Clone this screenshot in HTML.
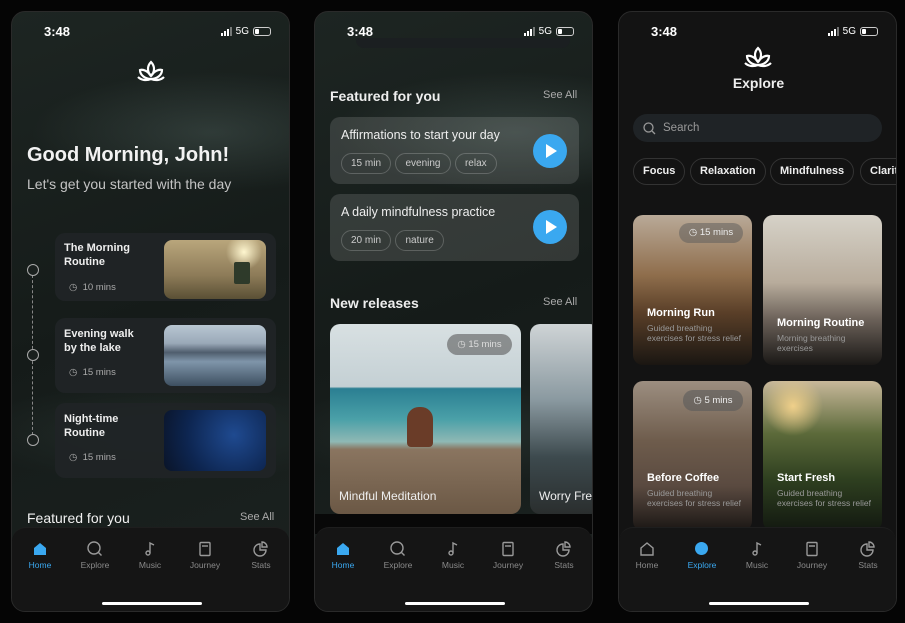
<!DOCTYPE html>
<html><head><meta charset="utf-8"><style>
*{margin:0;padding:0;box-sizing:border-box}
body{width:905px;height:623px;background:#050505;font-family:"Liberation Sans",sans-serif;position:relative;overflow:hidden;color:#eee}
.ph{position:absolute;top:11px;width:279px;height:601px;border-radius:14px;overflow:hidden;border:1px solid #2a2a2a}
.a{position:absolute}
.time{left:32px;top:12px;font-size:13px;font-weight:bold;color:#fff}
.sig{right:18px;top:14px;font-size:10px;color:#fff;display:flex;align-items:center;gap:4px}
.bars{display:flex;align-items:flex-end;gap:1px}
.bars i{display:block;width:2px;background:#fff}
.bat{width:18px;height:9px;border:1px solid #ccc;border-radius:3px;position:relative}
.bat:after{content:"";position:absolute;left:1px;top:1px;width:4px;height:5px;background:#fff;border-radius:1px}
.tab{left:0;right:0;bottom:0;height:84px;background:#151515;border-top-left-radius:14px;border-top-right-radius:14px;border-top:1px solid #1e1e1e}
.ti{position:absolute;top:13px;width:50px;text-align:center;font-size:8.5px;color:#8a8a8a}
.ti svg{display:block;margin:0 auto 3px}
.hi{position:absolute;bottom:6px;left:90px;width:100px;height:3px;background:#fff;border-radius:2px}
.card{background:rgba(32,36,38,.95);border-radius:10px}
.pill{border:1px solid rgba(255,255,255,.2);border-radius:12px;font-size:10px;color:#ccc;padding:4px 9px;display:inline-block}
.play{width:34px;height:34px;border-radius:50%;background:#3aa8f0}
.play:after{content:"";position:absolute;left:13px;top:10px;border-left:11px solid #fff;border-top:7px solid transparent;border-bottom:7px solid transparent}
.chip{border:1px solid #333;border-radius:14px;height:27px;font-size:11px;line-height:25px;padding:0 9px;color:#eee;font-weight:bold;position:absolute;top:146px;white-space:nowrap}
.gc{position:absolute;width:119px;border-radius:10px;overflow:hidden}
.gc b{position:absolute;left:14px;font-size:11px;color:#fff}
.gc p{position:absolute;left:14px;font-size:8.5px;color:#999;line-height:10px;width:95px}
.bg{background:radial-gradient(ellipse 180px 60px at 200px 120px,rgba(90,110,105,.35),transparent),radial-gradient(ellipse 200px 50px at 150px 420px,rgba(70,90,85,.25),transparent),linear-gradient(160deg,#1d2522,#151b19 50%,#1b2220)}
</style></head><body>

<!-- PHONE 1 -->
<div class="ph bg" style="left:11px">
<div class="a time">3:48</div>
<div class="a sig"><span class="bars"><i style="height:3px"></i><i style="height:5px"></i><i style="height:7px"></i><i style="height:9px;opacity:.4"></i></span>5G<span class="bat"></span></div>
<svg class="a" style="left:124px;top:47px" width="30" height="28" viewBox="0 0 30 28" fill="none" stroke="#fff" stroke-width="2.2"><path d="M15 3c-4 4-4 10 0 14 4-4 4-10 0-14z"/><path d="M15 17c-3-5-8-7-11-6 0 5 5 9 11 9"/><path d="M15 17c3-5 8-7 11-6 0 5-5 9-11 9"/><path d="M15 20c-5 2-10 1-13-2M15 20c5 2 10 1 13-2"/></svg>
<div class="a" style="left:15px;top:132px;font-size:20px;font-weight:bold;color:#f2f2f2">Good Morning, John!</div>
<div class="a" style="left:15px;top:164px;font-size:14px;color:#c4c4c4">Let's get you started with the day</div>
<div class="a" style="left:20px;top:258px;height:170px;border-left:1px dashed #888"></div>
<div class="a" style="left:15px;top:252px;width:12px;height:12px;border:1.5px solid #aaa;border-radius:50%;background:#1a201e"></div>
<div class="a" style="left:15px;top:337px;width:12px;height:12px;border:1.5px solid #aaa;border-radius:50%;background:#1a201e"></div>
<div class="a" style="left:15px;top:422px;width:12px;height:12px;border:1.5px solid #aaa;border-radius:50%;background:#1a201e"></div>
<div class="a card" style="left:43px;top:221px;width:221px;height:68px"></div>
<div class="a card" style="left:43px;top:306px;width:221px;height:75px"></div>
<div class="a card" style="left:43px;top:391px;width:221px;height:75px"></div>
<div class="a" style="left:52px;top:229px;font-size:11px;font-weight:bold;line-height:14px;color:#eee">The Morning<br>Routine</div>
<div class="a" style="left:57px;top:270px;font-size:9.5px;color:#aaa">◷ &nbsp;10 mins</div>
<div class="a" style="left:152px;top:228px;width:102px;height:59px;border-radius:8px;background:radial-gradient(circle at 80px 12px,#fff7d0,transparent 18px),linear-gradient(180deg,#b9a67c,#8d7b58 60%,#5a5035)"></div>
<div class="a" style="left:222px;top:250px;width:16px;height:22px;background:#2e3a2a;border-radius:2px"></div>
<div class="a" style="left:52px;top:315px;font-size:11px;font-weight:bold;line-height:14px;color:#eee">Evening walk<br>by the lake</div>
<div class="a" style="left:57px;top:355px;font-size:9.5px;color:#aaa">◷ &nbsp;15 mins</div>
<div class="a" style="left:152px;top:313px;width:102px;height:61px;border-radius:8px;background:linear-gradient(180deg,#b8c6d2 0,#9aa9b8 30%,#4f5d6d 45%,#7f95aa 60%,#3d4f60)"></div>
<div class="a" style="left:52px;top:400px;font-size:11px;font-weight:bold;line-height:14px;color:#eee">Night-time<br>Routine</div>
<div class="a" style="left:57px;top:440px;font-size:9.5px;color:#aaa">◷ &nbsp;15 mins</div>
<div class="a" style="left:152px;top:398px;width:102px;height:61px;border-radius:8px;background:radial-gradient(circle at 70px 25px,#1f4a90,#0d2550 60%,#0a1428)"></div>
<div class="a" style="left:15px;top:498px;font-size:14px;color:#f0f0f0">Featured for you</div>
<div class="a" style="left:228px;top:499px;font-size:11px;color:#aaa">See All</div>
<div class="a tab">
 <div class="ti" style="left:3px;color:#3aa8f0"><svg width="16" height="16" viewBox="0 0 16 16"><path d="M2 7l6-5 6 5v7H2z" fill="#3aa8f0"/></svg>Home</div>
 <div class="ti" style="left:58px"><svg width="16" height="16" viewBox="0 0 16 16" fill="none" stroke="#999" stroke-width="1.4"><circle cx="7" cy="7" r="6"/><path d="M11.5 11.5l3 3"/></svg>Explore</div>
 <div class="ti" style="left:113px"><svg width="16" height="16" viewBox="0 0 16 16" fill="none" stroke="#999" stroke-width="1.4"><circle cx="6" cy="12" r="2"/><path d="M8 12V2l4 2"/></svg>Music</div>
 <div class="ti" style="left:168px"><svg width="16" height="16" viewBox="0 0 16 16" fill="none" stroke="#999" stroke-width="1.4"><rect x="3" y="1.5" width="10" height="13" rx="1"/><path d="M5 5h6"/></svg>Journey</div>
 <div class="ti" style="left:224px"><svg width="16" height="16" viewBox="0 0 16 16" fill="none" stroke="#999" stroke-width="1.4"><path d="M7 3a6 6 0 1 0 6 6H7z"/><path d="M9 1v5h5a5 5 0 0 0-5-5z"/></svg>Stats</div>
 <div class="hi"></div>
</div>
</div>

<!-- PHONE 2 -->
<div class="ph bg" style="left:314px">
<div class="a" style="left:41px;top:26px;width:214px;height:10px;background:#1b1f21;border-radius:0 0 8px 8px"></div>
<div class="a time">3:48</div>
<div class="a sig"><span class="bars"><i style="height:3px"></i><i style="height:5px"></i><i style="height:7px"></i><i style="height:9px;opacity:.4"></i></span>5G<span class="bat"></span></div>
<div class="a" style="left:15px;top:76px;font-size:14px;font-weight:bold;color:#eee">Featured for you</div>
<div class="a" style="left:228px;top:77px;font-size:11px;color:#aaa">See All</div>
<div class="a" style="left:15px;top:105px;width:249px;height:67px;background:rgba(255,255,255,.13);border-radius:10px"></div>
<div class="a" style="left:26px;top:116px;font-size:12.5px;color:#eee">Affirmations to start your day</div>
<div class="a" style="left:26px;top:141px"><span class="pill">15 min</span> <span class="pill">evening</span> <span class="pill">relax</span></div>
<div class="a play" style="left:218px;top:122px"></div>
<div class="a" style="left:15px;top:182px;width:249px;height:67px;background:rgba(255,255,255,.13);border-radius:10px"></div>
<div class="a" style="left:26px;top:193px;font-size:12.5px;color:#eee">A daily mindfulness practice</div>
<div class="a" style="left:26px;top:218px"><span class="pill">20 min</span> <span class="pill">nature</span></div>
<div class="a play" style="left:218px;top:198px"></div>
<div class="a" style="left:15px;top:283px;font-size:14px;font-weight:bold;color:#eee">New releases</div>
<div class="a" style="left:228px;top:284px;font-size:11px;color:#aaa">See All</div>
<div class="a" style="left:15px;top:312px;width:191px;height:190px;border-radius:10px;background:linear-gradient(180deg,#d8e0e2 0,#c4d0d4 33%,#2b7f92 34%,#4aa0a8 50%,#8fb8b4 62%,#8a7560 66%,#6b5845 100%)"></div>
<div class="a" style="left:92px;top:395px;width:26px;height:40px;background:#6a3c28;border-radius:12px 12px 4px 4px"></div>
<div class="a" style="left:132px;top:322px;width:65px;height:21px;border-radius:11px;background:rgba(90,90,90,.6);font-size:9.5px;color:#ddd;line-height:21px;text-align:center">◷ 15 mins</div>
<div class="a" style="left:24px;top:477px;font-size:12px;color:#eee">Mindful Meditation</div>
<div class="a" style="left:215px;top:312px;width:70px;height:190px;border-radius:10px;background:linear-gradient(180deg,#cfd4d6,#8a99a0 40%,#3d4a4e 70%,#2a2e2e)"></div>
<div class="a" style="left:224px;top:477px;font-size:12px;color:#eee;white-space:nowrap">Worry Free</div>
<div class="a" style="left:0;top:502px;width:279px;height:20px;background:#080808"></div>
<div class="a tab">
 <div class="ti" style="left:3px;color:#3aa8f0"><svg width="16" height="16" viewBox="0 0 16 16"><path d="M2 7l6-5 6 5v7H2z" fill="#3aa8f0"/></svg>Home</div>
 <div class="ti" style="left:58px"><svg width="16" height="16" viewBox="0 0 16 16" fill="none" stroke="#999" stroke-width="1.4"><circle cx="7" cy="7" r="6"/><path d="M11.5 11.5l3 3"/></svg>Explore</div>
 <div class="ti" style="left:113px"><svg width="16" height="16" viewBox="0 0 16 16" fill="none" stroke="#999" stroke-width="1.4"><circle cx="6" cy="12" r="2"/><path d="M8 12V2l4 2"/></svg>Music</div>
 <div class="ti" style="left:168px"><svg width="16" height="16" viewBox="0 0 16 16" fill="none" stroke="#999" stroke-width="1.4"><rect x="3" y="1.5" width="10" height="13" rx="1"/><path d="M5 5h6"/></svg>Journey</div>
 <div class="ti" style="left:224px"><svg width="16" height="16" viewBox="0 0 16 16" fill="none" stroke="#999" stroke-width="1.4"><path d="M7 3a6 6 0 1 0 6 6H7z"/><path d="M9 1v5h5a5 5 0 0 0-5-5z"/></svg>Stats</div>
 <div class="hi"></div>
</div>
</div>

<!-- PHONE 3 -->
<div class="ph" style="left:618px;background:#131313">
<div class="a time">3:48</div>
<div class="a sig"><span class="bars"><i style="height:3px"></i><i style="height:5px"></i><i style="height:7px"></i><i style="height:9px;opacity:.4"></i></span>5G<span class="bat"></span></div>
<svg class="a" style="left:124px;top:33px" width="30" height="28" viewBox="0 0 30 28" fill="none" stroke="#fff" stroke-width="2.2"><path d="M15 3c-4 4-4 10 0 14 4-4 4-10 0-14z"/><path d="M15 17c-3-5-8-7-11-6 0 5 5 9 11 9"/><path d="M15 17c3-5 8-7 11-6 0 5-5 9-11 9"/><path d="M15 20c-5 2-10 1-13-2M15 20c5 2 10 1 13-2"/></svg>
<div class="a" style="left:0;width:279px;top:63px;text-align:center;font-size:14px;font-weight:bold;color:#eee">Explore</div>
<div class="a" style="left:14px;top:102px;width:249px;height:28px;border-radius:14px;background:#1f2326"></div>
<svg class="a" style="left:24px;top:110px" width="13" height="13" viewBox="0 0 13 13" fill="none" stroke="#999" stroke-width="1.3"><circle cx="5.5" cy="5.5" r="4.5"/><path d="M9 9l3 3"/></svg>
<div class="a" style="left:44px;top:110px;font-size:11.5px;color:#999">Search</div>
<div class="chip" style="left:14px">Focus</div>
<div class="chip" style="left:71px">Relaxation</div>
<div class="chip" style="left:151px">Mindfulness</div>
<div class="chip" style="left:241px">Clarity</div>
<div class="gc" style="left:14px;top:203px;height:150px;background:linear-gradient(180deg,#b9aa98,#8f6e4c 40%,#5a3f28 65%,#1a1612)"><div class="a" style="left:46px;top:8px;width:64px;height:20px;border-radius:10px;background:rgba(90,90,90,.5);font-size:9.5px;color:#eee;line-height:20px;text-align:center">◷ 15 mins</div><b style="top:92px">Morning Run</b><p style="top:108px">Guided breathing exercises for stress relief</p></div>
<div class="gc" style="left:144px;top:203px;height:150px;background:linear-gradient(180deg,#d6d2c8,#b8ac9c 45%,#6a6058 70%,#1a1816)"><b style="top:102px">Morning Routine</b><p style="top:118px">Morning breathing exercises</p></div>
<div class="gc" style="left:14px;top:369px;height:150px;background:linear-gradient(180deg,#9c8e80,#6e5c4c 40%,#5a4a40 70%,#1a1614)"><div class="a" style="left:50px;top:9px;width:60px;height:21px;border-radius:10px;background:rgba(90,90,90,.6);font-size:9.5px;color:#eee;line-height:21px;text-align:center">◷ 5 mins</div><b style="top:91px">Before Coffee</b><p style="top:107px">Guided breathing exercises for stress relief</p></div>
<div class="gc" style="left:144px;top:369px;height:150px;background:radial-gradient(circle at 30px 25px,#f0d08a,transparent 30px),linear-gradient(180deg,#c8b89a,#5c6a3a 35%,#2f4020 65%,#121810)"><b style="top:91px">Start Fresh</b><p style="top:107px">Guided breathing exercises for stress relief</p></div>
<div class="a tab">
 <div class="ti" style="left:3px"><svg width="16" height="16" viewBox="0 0 16 16" fill="none" stroke="#999" stroke-width="1.4"><path d="M2 7l6-5 6 5v7H2z"/></svg>Home</div>
 <div class="ti" style="left:58px;color:#3aa8f0"><svg width="16" height="16" viewBox="0 0 16 16"><circle cx="7.5" cy="7.5" r="6.5" fill="#3aa8f0"/></svg>Explore</div>
 <div class="ti" style="left:113px"><svg width="16" height="16" viewBox="0 0 16 16" fill="none" stroke="#999" stroke-width="1.4"><circle cx="6" cy="12" r="2"/><path d="M8 12V2l4 2"/></svg>Music</div>
 <div class="ti" style="left:168px"><svg width="16" height="16" viewBox="0 0 16 16" fill="none" stroke="#999" stroke-width="1.4"><rect x="3" y="1.5" width="10" height="13" rx="1"/><path d="M5 5h6"/></svg>Journey</div>
 <div class="ti" style="left:224px"><svg width="16" height="16" viewBox="0 0 16 16" fill="none" stroke="#999" stroke-width="1.4"><path d="M7 3a6 6 0 1 0 6 6H7z"/><path d="M9 1v5h5a5 5 0 0 0-5-5z"/></svg>Stats</div>
 <div class="hi"></div>
</div>
</div>
</body></html>
